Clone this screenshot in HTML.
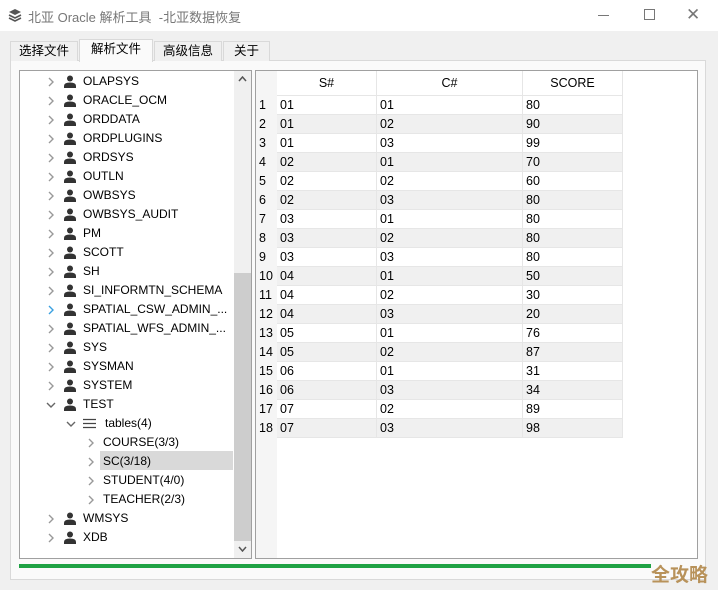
<!DOCTYPE html><html><head><style>
*{margin:0;padding:0;box-sizing:border-box}
body{width:718px;height:590px;background:#f0f0f0;font-family:"Liberation Sans","Noto Sans CJK SC",sans-serif;font-size:12px;color:#000;position:relative;overflow:hidden}
.title{position:absolute;left:0;top:0;width:718px;height:31px;background:#fff;color:#777;font-size:13px}
.abs{position:absolute}
.tab{position:absolute;top:41px;height:20px;border:1px solid #d9d9d9;border-bottom:none;background:#f0f0f0;font-size:12.5px;text-align:center;line-height:19px}
.panel{position:absolute;left:10px;top:60px;width:696px;height:520px;background:#fafafa;border:1px solid #d9d9d9}
.tree{position:absolute;left:19px;top:70px;width:233px;height:489px;background:#fff;border:1px solid #a0a0a0;overflow:hidden}
.row{position:absolute;height:19px;line-height:19px;font-size:12px;white-space:nowrap}
.arr{position:absolute}
.grid{position:absolute;left:255px;top:70px;width:443px;height:489px;background:#fff;border:1px solid #a0a0a0;overflow:hidden}
.c{position:absolute;height:19px;line-height:19px;font-size:12.5px;border-right:1px solid #e6e6e6;border-bottom:1px solid #e6e6e6;padding-left:3px}
</style></head><body>
<div class="title">
<svg class="abs" style="left:8px;top:8px" width="14" height="14" viewBox="0 0 14 14"><path d="M7 1L13 4 7 7 1 4Z" fill="#555"/><path d="M1 7l6 3 6-3M1 10l6 3 6-3" stroke="#555" stroke-width="1.6" fill="none"/></svg>
<span class="abs" style="left:28px;top:7px">北亚 Oracle 解析工具 &nbsp;-北亚数据恢复</span>
<div class="abs" style="left:598px;top:15px;width:11px;height:1px;background:#777"></div>
<div class="abs" style="left:644px;top:9px;width:11px;height:11px;border:1px solid #777"></div>
<span class="abs" style="left:686px;top:5px;font-size:17px;color:#777">✕</span>
</div>
<div class="panel"></div>
<div class="tab" style="left:10px;width:68px">选择文件</div>
<div class="tab" style="left:79px;top:39px;height:23px;width:74px;background:#fafafa">解析文件</div>
<div class="tab" style="left:154px;width:68px">高级信息</div>
<div class="tab" style="left:223px;width:47px">关于</div>
<div class="tree">
<div class="abs" style="left:214px;top:0;width:17px;height:487px;background:#f0f0f0"></div>
<div class="abs" style="left:214px;top:202px;width:17px;height:268px;background:#cdcdcd"></div>
<svg class="abs" style="left:218px;top:5px" width="9" height="6"><path d="M1 5L4.5 1 8 5" stroke="#555" stroke-width="1.5" fill="none"/></svg>
<svg class="abs" style="left:218px;top:475px" width="9" height="6"><path d="M1 1L4.5 5 8 1" stroke="#555" stroke-width="1.5" fill="none"/></svg>
<div class="abs" style="left:80px;top:380px;width:133px;height:19px;background:#d9d9d9"></div>
<div id="t"></div>
</div>
<div class="grid"><div class="abs" style="left:0;top:0;width:21px;height:487px;background:#f5f5f5"></div><div id="g"></div></div>
<div class="abs" style="left:19px;top:564px;width:632px;height:4px;background:#1fa244"></div>
<div class="abs" style="left:651px;top:560px;font-size:19px;font-weight:bold;color:#b8925a">全攻略</div>
<script>
var P='<svg width="12" height="13" viewBox="0 0 12 13" style="position:absolute;top:3px"><circle cx="6" cy="3.5" r="3" fill="#333"/><path d="M0 13V11Q0 7.5 6 7.5 12 7.5 12 11V13Z" fill="#333"/></svg>';
function R(x,y,c){return '<svg class="arr" style="left:'+x+'px;top:'+(y+5)+'px" width="8" height="10"><path d="M2 1L6 5 2 9" stroke="'+(c||'#999')+'" stroke-width="1.4" fill="none"/></svg>';}
function D(x,y){return '<svg class="arr" style="left:'+(x-1)+'px;top:'+(y+6)+'px" width="10" height="8"><path d="M1 2L5 6 9 2" stroke="#666" stroke-width="1.4" fill="none"/></svg>';}
var items=["OLAPSYS","ORACLE_OCM","ORDDATA","ORDPLUGINS","ORDSYS","OUTLN","OWBSYS","OWBSYS_AUDIT","PM","SCOTT","SH","SI_INFORMTN_SCHEMA","SPATIAL_CSW_ADMIN_...","SPATIAL_WFS_ADMIN_...","SYS","SYSMAN","SYSTEM","TEST"];
var h='',y=1;
items.forEach(function(s,i){h+=(s=="TEST"?D(27,y):R(27,y,i==12?'#3aa0e0':0))+'<div class="row" style="left:44px;top:'+y+'px;width:14px">'+P+'</div><div class="row" style="left:63px;top:'+y+'px">'+s+'</div>';y+=19;});
h+=D(47,y)+'<svg class="abs" style="left:63px;top:'+(y+4)+'px" width="13" height="11"><path d="M0 1.5H13M0 5.5H13M0 9.5H13" stroke="#444" stroke-width="1.3"/></svg><div class="row" style="left:85px;top:'+y+'px">tables(4)</div>';y+=19;
["COURSE(3/3)","SC(3/18)","STUDENT(4/0)","TEACHER(2/3)"].forEach(function(s){h+=R(67,y)+'<div class="row" style="left:83px;top:'+y+'px">'+s+'</div>';y+=19;});
["WMSYS","XDB"].forEach(function(s){h+=R(27,y)+'<div class="row" style="left:44px;top:'+y+'px;width:14px">'+P+'</div><div class="row" style="left:63px;top:'+y+'px">'+s+'</div>';y+=19;});
document.getElementById('t').innerHTML=h;
var d=[["01","01",80],["01","02",90],["01","03",99],["02","01",70],["02","02",60],["02","03",80],["03","01",80],["03","02",80],["03","03",80],["04","01",50],["04","02",30],["04","03",20],["05","01",76],["05","02",87],["06","01",31],["06","03",34],["07","02",89],["07","03",98]];
var g='<div class="c" style="left:21px;top:0;width:100px;height:25px;line-height:24px;text-align:center;padding:0">S#</div><div class="c" style="left:121px;top:0;width:146px;height:25px;line-height:24px;text-align:center;padding:0">C#</div><div class="c" style="left:267px;top:0;width:100px;height:25px;line-height:24px;text-align:center;padding:0">SCORE</div>';
d.forEach(function(r,i){var t=25+i*19,bg=i%2?'#f0f0f0':'#fff';g+='<div class="abs" style="left:3px;top:'+t+'px;line-height:19px;font-size:12.5px">'+(i+1)+'</div><div class="c" style="left:21px;top:'+t+'px;width:100px;background:'+bg+'">'+r[0]+'</div><div class="c" style="left:121px;top:'+t+'px;width:146px;background:'+bg+'">'+r[1]+'</div><div class="c" style="left:267px;top:'+t+'px;width:100px;background:'+bg+'">'+r[2]+'</div>';});
document.getElementById('g').innerHTML=g;
</script>
</body></html>
